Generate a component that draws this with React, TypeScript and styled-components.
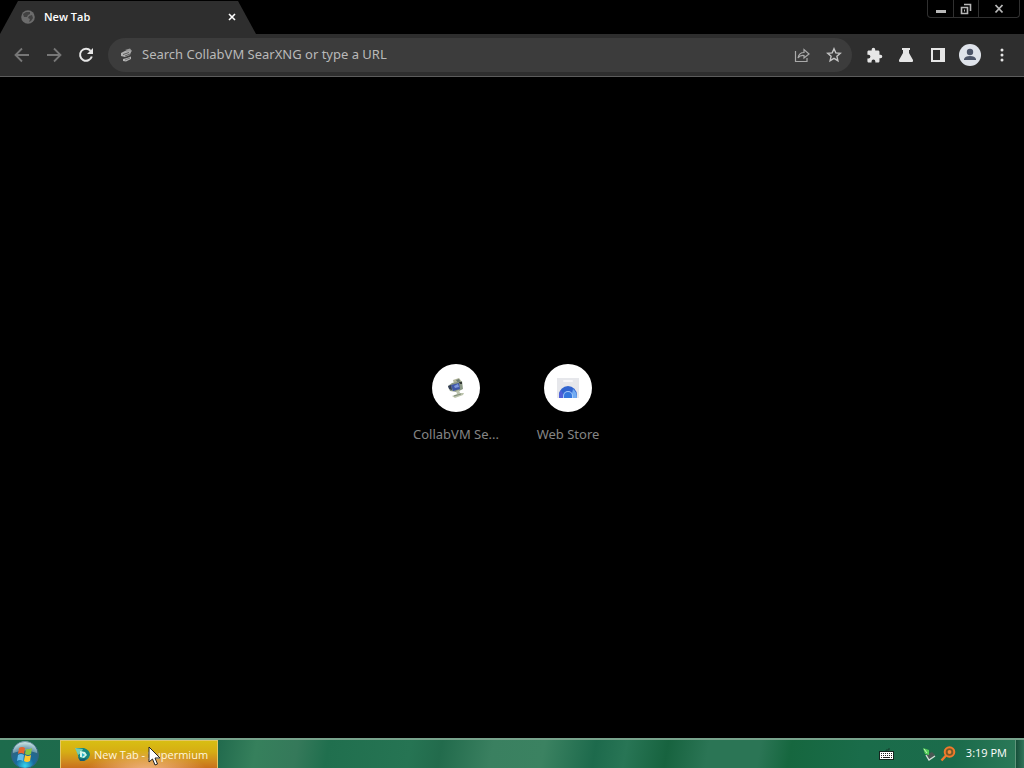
import React from "react";
import styled, { createGlobalStyle } from "styled-components";

const GlobalStyle = createGlobalStyle`
  * { box-sizing: border-box; }
  html, body { margin: 0; background: #000; }
  body, button, input { font-family: "Noto Sans", "Open Sans", sans-serif; }
  button { border: 0; padding: 0; background: none; color: inherit; }
`;

const Screen = styled.div`
  display: flex;
  flex-direction: column;
  min-height: 100vh;
  background: #000;
`;

const TabStrip = styled.header`
  display: flex;
  justify-content: space-between;
  align-items: flex-start;
  height: 34px;
  padding-right: 4px;
`;

const Tab = styled.div`
  display: flex;
  align-items: center;
  width: 256px;
  height: 34px;
  padding: 0 17px 0 21px;
  background: #2e2e2e;
  color: #fff;
  clip-path: polygon(18px 1px, 238px 1px, 256px 100%, 0 100%);
`;

const TabTitle = styled.span`
  flex: 1;
  padding-left: 9px;
  font-family: "Open Sans", "Noto Sans", sans-serif;
  font-size: 11px;
  font-weight: 600;
  line-height: 16px;
`;

const TabClose = styled.button`
  display: flex;
  width: 14px;
  height: 14px;
  align-items: center;
  justify-content: center;
`;

const WindowControls = styled.div`
  display: flex;
  height: 18px;
  border: 1px solid #303030;
  border-top: 0;
  border-radius: 0 0 4px 4px;
`;

const WindowButton = styled.button<{ $wide?: boolean }>`
  display: flex;
  align-items: center;
  justify-content: center;
  width: ${(p) => (p.$wide ? 41 : 25)}px;
  color: #b8b8b8;
  & + & { border-left: 1px solid #303030; }
`;

const Toolbar = styled.nav`
  display: flex;
  align-items: center;
  height: 43px;
  padding: 0 6px;
  background: #2e2e2e;
  border-bottom: 1px solid #5c5c5c;
`;

const ToolButton = styled.button<{ $tone?: string }>`
  display: flex;
  flex: none;
  align-items: center;
  justify-content: center;
  width: 32px;
  height: 32px;
  color: ${(p) => p.$tone ?? "#e6e6e6"};
`;

const AddressBar = styled.label`
  display: flex;
  flex: 1;
  align-items: center;
  height: 34px;
  margin: 0 6px;
  padding: 0 2px 0 12px;
  border-radius: 17px;
  background: #3c3c3c;
`;

const AddressInput = styled.input`
  flex: 1;
  min-width: 0;
  height: 24px;
  margin-left: 9px;
  padding: 0 0 2px;
  border: 0;
  outline: 0;
  background: none;
  color: #e0e0e0;
  font-size: 13px;
  &::placeholder { color: #b9b9b9; opacity: 1; }
`;

const NewTabPage = styled.main`
  display: flex;
  flex: 1;
  align-items: center;
  justify-content: center;
`;

const Shortcut = styled.a`
  display: flex;
  flex-direction: column;
  align-items: center;
  gap: 12px;
  width: 112px;
  height: 112px;
  padding-top: 12px;
  color: #858585;
  font-size: 13px;
  line-height: 20px;
  text-decoration: none;
`;

const ShortcutIcon = styled.span`
  display: flex;
  align-items: center;
  justify-content: center;
  width: 48px;
  height: 48px;
  border-radius: 50%;
  background: #fff;
`;

const Taskbar = styled.footer`
  display: flex;
  align-items: stretch;
  height: 30px;
  border-top: 2px solid #78a38c;
  background: linear-gradient(100deg,
    #1d6b4c 0%, #20694c 21%, #36805c 25%, #35795a 29%, #206f4e 32%, #267453 40%,
    #226b4c 43%, #3a8060 48%, #3b8261 53%, #1d6a4c 58%, #287555 61%, #17633f 65%,
    #2b7555 69%, #2b7555 74%, #16673f 77%, #1a6c4a 84%, #1b6b4b 93%, #2d7b5a 100%);
`;

const StartButton = styled.button`
  display: flex;
  flex: none;
  justify-content: center;
  width: 50px;
  margin-right: 10px;
`;

const TaskButton = styled.button`
  position: relative;
  display: flex;
  align-items: center;
  width: 158px;
  padding-left: 14px;
  border: 1px solid #e3c766;
  border-bottom: 0;
  background:
    radial-gradient(ellipse at 55% 115%, rgba(255, 205, 160, 0.8), transparent 50%),
    linear-gradient(#d8be12 0%, #d6ad14 40%, #cf8a1e 75%, #c9701c 100%);
  color: #fff6dc;
  font-family: "Open Sans", "Noto Sans", sans-serif;
  font-size: 11px;
  font-weight: 500;
  line-height: 16px;
  white-space: nowrap;
  gap: 3px;
`;

const Pointer = styled.svg`
  position: absolute;
  left: 87px;
  top: 5px;
`;

const Tray = styled.div`
  display: flex;
  align-items: center;
  margin-left: auto;
  color: #fff;
`;

const TrayButton = styled.button<{ $gap?: number }>`
  display: flex;
  margin-right: ${(p) => p.$gap ?? 0}px;
`;

const Clock = styled.time`
  font-family: "Open Sans", "Noto Sans", sans-serif;
  font-size: 11px;
  font-weight: 500;
  line-height: 16px;
  padding-bottom: 2px;
`;

const ShowDesktop = styled.button`
  align-self: stretch;
  width: 9px;
  margin-left: 8px;
  border-left: 1px solid #5f957b;
  background: linear-gradient(90deg, #164f39, #31745a);
`;

const GlobeIcon = () => (
  <svg width="14" height="14" viewBox="0 0 14 14" aria-hidden="true">
    <circle cx="7" cy="7" r="6.8" fill="#6c6c6c" />
    <path d="M2 4 L5 2 L9 2 L9 4 L7 5 L6 7 L3 7 Z M8 6 L11 5 L12 8 L10 11 L8 12 L9 9 L7 8 Z" fill="#424242" />
  </svg>
);

const AddressMark = () => (
  <svg width="13" height="14" viewBox="0 0 13 14" aria-hidden="true">
    <path d="M5 2 L10 0.500 L12 3 L10 5 Z" fill="#9a9a9a" />
    <path d="M1 5 L5 3 L11 3.500 L10 7 L5 9 L1 8 Z" fill="#b0b0b0" />
    <path d="M3 6.500 L9 4.500 M5 8 L10 6" stroke="#5a5a5a" />
    <path d="M3 11 L7 10 L11 8.500 L11 11 L6 13.500 L3 13 Z" fill="#b4b4b4" />
    <path d="M5 12 L10 10" stroke="#757575" />
  </svg>
);

const MonitorMark = () => (
  <svg width="20" height="20" viewBox="0 0 20 20" aria-hidden="true">
    <path d="M7 2 L13 0 L16 4 L14 7 L8 6 Z" fill="#b3b69b" />
    <path d="M10 2 L13 1 L15 5 L12 5 Z" fill="#6b7a70" />
    <path d="M2 8 L6 5 L16 3 L17 11 L11 14 L4 13 Z" fill="#8b9886" />
    <path d="M5 7 L13 5 L14 11 L7 13 Z" fill="#4057a6" />
    <path d="M8 8 L12 6 L13 9 L9 10 Z" fill="#7e98df" />
    <path d="M2 8 L5 7 L6 12 L3 11 Z" fill="#343f58" />
    <path d="M13 4 H16 V6 H14 Z" fill="#323732" />
    <path d="M10 13 L13 12 L14 15 L18 15 L17 17 L9 20 L6 18 L11 16 Z" fill="#bcc4ad" />
    <path d="M8 18 L15 16" stroke="#7f8b78" />
  </svg>
);

const StoreIcon = () => (
  <svg width="22" height="20" viewBox="0 0 22 20" aria-hidden="true">
    <path d="M0 0 H22 V20 H0 Z" fill="#e6e7eb" />
    <rect x="6" y="2" width="10" height="2" rx="1" fill="#f6f6f8" />
    <path d="M2 20 V17 A9 9 0 0 1 20 17 V20 Z" fill="#3164cf" />
    <path d="M2 20 V17 Q2 14 4 12 L8 20 Z" fill="#5260d9" />
    <path d="M16 11 Q20 14 20 20 H14 Z" fill="#72acf2" />
    <path d="M6 20 V18 A5 5 0 0 1 16 18 V20 Z" fill="#a4c8fa" />
    <path d="M7 20 V18 A4 4 0 0 1 15 18 V20 Z" fill="#3477dd" />
  </svg>
);

const StartOrb = () => (
  <svg width="28" height="28" viewBox="0 0 28 28" aria-hidden="true">
    <defs>
      <radialGradient id="orb" cx="50%" cy="90%" r="85%">
        <stop offset="0" stopColor="#36d4ee" />
        <stop offset="0.4" stopColor="#176b9e" />
        <stop offset="0.75" stopColor="#2b6684" />
        <stop offset="1" stopColor="#b4d3d4" />
      </radialGradient>
    </defs>
    <circle cx="14" cy="15" r="13.5" fill="url(#orb)" stroke="#34627a" />
    <path d="M2 13 A12 12 0 0 1 26 13 Q14 8 2 13" fill="#d8edf0" opacity="0.4" />
    <path d="M8 8 Q11 6 14 8 L13 14 Q10 12 7 14 Z" fill="#e56530" />
    <path d="M15 9 Q18 10 21 8 L20 14 Q17 16 14 14 Z" fill="#8bc53e" />
    <path d="M7 15 Q10 13 13 15 L12 21 Q9 19 6 21 Z" fill="#66bce9" />
    <path d="M14 15 Q17 17 20 15 L19 21 Q16 23 13 21 Z" fill="#ffc72d" />
  </svg>
);

const SupermiumIcon = () => (
  <svg width="16" height="16" viewBox="0 0 16 16" aria-hidden="true">
    <path d="M1 1 H9 Q15 3 15 8 Q13 14 7 14 Q3 13 3 8 Z" fill="#16877d" />
    <path d="M0 1 L8 2 L6 6 L3 8 Z" fill="#70cdb4" />
    <path d="M5 4 L10 5 L12 8 L9 11 L5 10 Z" fill="#d3f6e8" />
    <path d="M7 6 L10 8 L7 10 Z" fill="#2bb2ca" />
    <path d="M3 10 L6 12 L12 11 L9 14 L5 14 Z" fill="#165d74" />
  </svg>
);

export default function App() {
  return (
    <Screen>
      <GlobalStyle />
      <TabStrip>
        <Tab>
          <GlobeIcon />
          <TabTitle>New Tab</TabTitle>
          <TabClose aria-label="Close tab">
            <svg width="8" height="8" viewBox="0 0 8 8"><path d="M1 1 L7 7 M7 1 L1 7" stroke="#fff" strokeWidth="1.6" /></svg>
          </TabClose>
        </Tab>
        <WindowControls>
          <WindowButton aria-label="Minimize">
            <svg width="12" height="12" viewBox="0 0 12 12"><path d="M1 8.5 H11" stroke="currentColor" strokeWidth="3" /></svg>
          </WindowButton>
          <WindowButton aria-label="Restore">
            <svg width="12" height="12" viewBox="0 0 12 12" fill="none" stroke="currentColor"><path d="M4 1.5 H10.5 V8 M1.5 4.5 H7.5 V10.5 H1.5 Z" strokeWidth="1.6" /><path d="M4 7.5 H5" strokeWidth="2" /></svg>
          </WindowButton>
          <WindowButton $wide aria-label="Close">
            <svg width="10" height="10" viewBox="0 0 10 10"><path d="M1.5 1 L8.5 8.5 M8.5 1 L1.5 8.5" stroke="currentColor" strokeWidth="1.8" /></svg>
          </WindowButton>
        </WindowControls>
      </TabStrip>

      <Toolbar aria-label="Browser toolbar">
        <ToolButton $tone="#777" aria-label="Back">
          <svg width="16" height="16" viewBox="0 0 16 16" fill="none" stroke="currentColor" strokeWidth="1.8"><path d="M15 8 H2 M8 1.5 L1.5 8 L8 14.5" /></svg>
        </ToolButton>
        <ToolButton $tone="#777" aria-label="Forward">
          <svg width="16" height="16" viewBox="0 0 16 16" fill="none" stroke="currentColor" strokeWidth="1.8"><path d="M1 8 H14 M8 1.5 L14.5 8 L8 14.5" /></svg>
        </ToolButton>
        <ToolButton aria-label="Reload">
          <svg width="16" height="16" viewBox="0 0 16 16"><path d="M12.6 3.8 A6 6 0 1 0 13.8 9.5" fill="none" stroke="currentColor" strokeWidth="2" /><path d="M15 1 V7 H9 Z" fill="currentColor" /></svg>
        </ToolButton>
        <AddressBar>
          <AddressMark />
          <AddressInput aria-label="Address" placeholder="Search CollabVM SearXNG or type a URL" />
          <ToolButton $tone="#aaa" aria-label="Share">
            <svg width="16" height="16" viewBox="0 0 16 16" fill="none" stroke="currentColor" strokeWidth="1.2"><path d="M1.5 4 V14.5 H13 V11" /><path d="M4 11 Q5 5.5 10 5.5 V2.5 L15 7 L10 11 V8.5 Q6 8 4 11 Z" /></svg>
          </ToolButton>
          <ToolButton $tone="#c4c4c4" aria-label="Bookmark">
            <svg width="16" height="16" viewBox="0 0 16 16" fill="none" stroke="currentColor" strokeWidth="1.4"><path d="M8 1.8 L9.8 5.9 L14.3 6.3 L10.9 9.3 L11.9 13.7 L8 11.4 L4.1 13.7 L5.1 9.3 L1.7 6.3 L6.2 5.9 Z" /></svg>
          </ToolButton>
        </AddressBar>
        <ToolButton aria-label="Extensions">
          <svg width="17" height="17" viewBox="0 0 24 24" fill="currentColor"><path d="M20.5 11H19V7c0-1.1-.9-2-2-2h-4V3.500a2.500 2.500 0 0 0-5 0V5H4c-1.100 0-2 .9-2 2v3.800h1.500a2.700 2.700 0 0 1 0 5.400H2V20c0 1.100.9 2 2 2h3.800v-1.500a2.700 2.700 0 0 1 5.400 0V22H17c1.100 0 2-.9 2-2v-4h1.500a2.500 2.500 0 0 0 0-5Z" /></svg>
        </ToolButton>
        <ToolButton aria-label="Experiments">
          <svg width="16" height="16" viewBox="0 0 16 16" fill="currentColor"><path d="M4 1 H12 V3 H11 V6 L15 13 Q15.500 15 14 15 H2 Q.5 15 1 13 L5 6 V3 H4 Z" /></svg>
        </ToolButton>
        <ToolButton aria-label="Side panel">
          <svg width="16" height="16" viewBox="0 0 16 16"><path fillRule="evenodd" d="M1 1 H15 V15 H1 Z M3 3 V13 H10 V3 Z" fill="currentColor" /></svg>
        </ToolButton>
        <ToolButton aria-label="Profile">
          <svg width="22" height="22" viewBox="0 0 22 22"><circle cx="11" cy="11" r="11" fill="#dfe3ea" /><circle cx="11" cy="8" r="3.200" fill="#4c5468" /><path d="M5 16 V15 Q6 12 11 12 Q16 12 17 15 V16 Z" fill="#4c5468" /></svg>
        </ToolButton>
        <ToolButton aria-label="Menu">
          <svg width="4" height="14" viewBox="0 0 4 14" fill="currentColor"><circle cx="2" cy="2" r="1.500" /><circle cx="2" cy="7" r="1.500" /><circle cx="2" cy="12" r="1.500" /></svg>
        </ToolButton>
      </Toolbar>

      <NewTabPage>
        <Shortcut href="#searxng">
          <ShortcutIcon><MonitorMark /></ShortcutIcon>
          <span>CollabVM Se...</span>
        </Shortcut>
        <Shortcut href="#webstore">
          <ShortcutIcon><StoreIcon /></ShortcutIcon>
          <span>Web Store</span>
        </Shortcut>
      </NewTabPage>

      <Taskbar>
        <StartButton aria-label="Start"><StartOrb /></StartButton>
        <TaskButton>
          <SupermiumIcon />
          <span>New Tab - Supermium</span>
          <Pointer width="13" height="20" viewBox="0 0 13 20" aria-hidden="true">
            <path d="M1 1 V16 L4.500 13 L7 19 L9.500 18 L7 12 H12 Z" fill="#fff" stroke="#222" />
          </Pointer>
        </TaskButton>
        <Tray>
          <TrayButton $gap={28} aria-label="Keyboard">
            <svg width="15" height="12" viewBox="0 0 15 12"><path d="M7 4 V2 H10 V0" fill="none" stroke="#153c2c" /><rect x="0.500" y="3.500" width="14" height="8" fill="#fff" stroke="#14261f" /><path d="M2 5.500 H13 M2 7.500 H13" stroke="#222" strokeDasharray="1 1" /><path d="M2 9.500 H3 M4 9.500 H11 M12 9.500 H13" stroke="#222" /></svg>
          </TrayButton>
          <TrayButton $gap={4} aria-label="Safely remove hardware">
            <svg width="14" height="14" viewBox="0 0 14 14"><path d="M4 8 L10 5 L13 8 L7 13 Z" fill="#4a5753" /><path d="M4 8 L7 13 L13 9" fill="none" stroke="#d5e0d9" strokeWidth="1.400" /><path d="M1 1 L7 3 L7 8 L3 7 Z" fill="#54cf58" /><path d="M2 2 L5 6" stroke="#c9f3bf" /></svg>
          </TrayButton>
          <TrayButton $gap={10} aria-label="Search tool">
            <svg width="16" height="16" viewBox="0 0 16 16"><circle cx="9.500" cy="6" r="4.800" fill="#7b5926" stroke="#f27a2c" strokeWidth="2" /><path d="M6 9.500 L1.500 14.500" stroke="#f27a2c" strokeWidth="2.400" /><circle cx="9.500" cy="6" r="1.900" fill="#f58a36" /></svg>
          </TrayButton>
          <Clock>3:19 PM</Clock>
          <ShowDesktop aria-label="Show desktop" />
        </Tray>
      </Taskbar>
    </Screen>
  );
}
